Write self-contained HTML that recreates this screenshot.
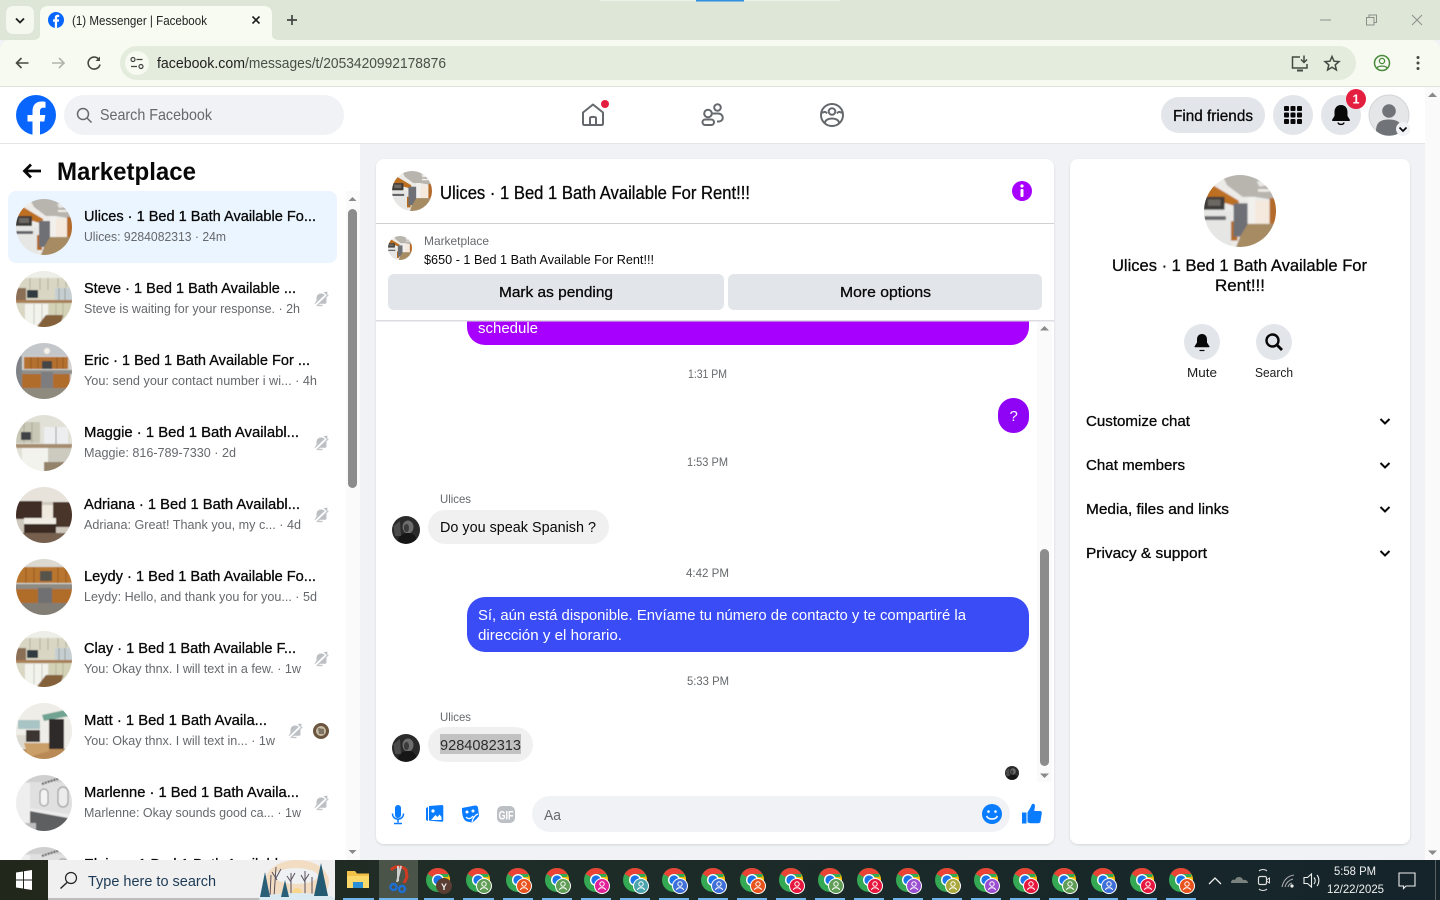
<!DOCTYPE html>
<html><head><meta charset="utf-8"><title>Messenger | Facebook</title>
<style>
html,body{margin:0;padding:0;width:1440px;height:900px;overflow:hidden;background:#f0f2f5}
svg{display:block;position:absolute;left:0;top:0}
text{font-family:"Liberation Sans",sans-serif;fill:#080809;white-space:pre}
.n{font-size:15px;stroke:#080809;stroke-width:.3px}
.s{font-size:13px;fill:#65686c}
.t{font-size:12px;fill:#65686c}
.m{font-size:15px;stroke:#080809;stroke-width:.3px}
.b{font-size:15px}
</style></head><body>
<svg width="1440" height="900" viewBox="0 0 1440 900" xmlns="http://www.w3.org/2000/svg">
<defs>
<linearGradient id="tb" x1="0" y1="0" x2="1" y2="0"><stop offset="0" stop-color="#22271b"/><stop offset=".35" stop-color="#1f2d28"/><stop offset="1" stop-color="#14242a"/></linearGradient>
<filter id="ph" x="-5%" y="-5%" width="110%" height="110%"><feGaussianBlur stdDeviation=".55"/></filter>
<clipPath id="cc"><circle cx="28" cy="28" r="28"/></clipPath>
<symbol id="a" viewBox="0 0 56 56"><g clip-path="url(#cc)"><g filter="url(#ph)"><rect x="-2" y="-2" width="60" height="60" fill="#ecebe8"/><path d="M13 -2H58V20L40 17L30 17L18 8Z" fill="#b8b4ae"/><path d="M41 5l7-1 3 4-8 1z" fill="#e8e8e6"/><path d="M42 11h9v2h-9z" fill="#f2f0ea"/><path d="M2 11L7 8L27 20V25L17 22H2Z" fill="#bd6f20"/><rect x="-2" y="17" width="18" height="10" fill="#3e3a38"/><rect x="3" y="19" width="10" height="5" fill="#6c6864"/><rect x="-2" y="28" width="24" height="30" fill="#e6e6e4"/><rect x="0" y="32" width="17" height="3" fill="#66666a"/><rect x="21" y="36" width="5" height="15" fill="#b56a1e"/><rect x="23" y="22" width="11" height="26" fill="#6e7076"/><rect x="34" y="17" width="6" height="22" fill="#f2f0ec"/><rect x="40" y="20" width="11" height="18" fill="#f4e9dc"/><rect x="51" y="18" width="7" height="20" fill="#b36a2b"/><path d="M25 56L28 48L34 38H58V58H20Z" fill="#a68b63"/></g></g></symbol>
<symbol id="b" viewBox="0 0 56 56"><g clip-path="url(#cc)"><g filter="url(#ph)"><rect x="-2" y="-2" width="60" height="60" fill="#d9d7c4"/><rect x="-2" y="-2" width="60" height="9" fill="#eeeee8"/><path d="M14 7v12M24 7v12M32 7v12M42 7v9M50 7v9" stroke="#aaa892" stroke-width=".8"/><rect x="-2" y="17" width="12" height="15" fill="#8a6e55"/><rect x="11" y="19" width="11" height="8" fill="#333a40"/><rect x="39" y="17" width="19" height="12" fill="#c5cfd2"/><path d="M43 17v12M49 17v12" stroke="#8b8f88" stroke-width=".8"/><rect x="-2" y="29" width="60" height="3" fill="#a97f56"/><rect x="9" y="33" width="23" height="22" fill="#f3f3ee"/><path d="M18 33v20M26 33v18" stroke="#b8b8ae" stroke-width=".7"/><rect x="33" y="32" width="22" height="15" fill="#d4d2b6"/><path d="M40 32v15M47 32v15" stroke="#aaa892" stroke-width=".7"/><path d="M19 58L30 44H47L44 58Z" fill="#84603a"/></g></g></symbol>
<symbol id="c" viewBox="0 0 56 56"><g clip-path="url(#cc)"><g filter="url(#ph)"><rect x="-2" y="-2" width="60" height="60" fill="#d4d2ce"/><rect x="-2" y="-2" width="60" height="15" fill="#c4c7ca"/><circle cx="31" cy="8" r="3" fill="#f7f3ea"/><rect x="8" y="14" width="44" height="12" fill="#b4702e"/><path d="M15 14v12M22 14v12M41 14v12M47 14v12" stroke="#8c5522" stroke-width=".8"/><rect x="26" y="18" width="10" height="8" fill="#444"/><rect x="-2" y="27" width="60" height="4" fill="#8f8f8c"/><rect x="6" y="31" width="48" height="14" fill="#b06c2c"/><rect x="25" y="29" width="12" height="16" fill="#7d7d80"/><rect x="-2" y="13" width="8" height="33" fill="#7f8388"/><rect x="-2" y="45" width="60" height="13" fill="#8f8a7e"/></g></g></symbol>
<symbol id="d" viewBox="0 0 56 56"><g clip-path="url(#cc)"><g filter="url(#ph)"><rect x="-2" y="-2" width="60" height="60" fill="#e2e1d8"/><rect x="0" y="7" width="24" height="21" fill="#c9c8b6"/><path d="M8 7v21M16 7v21" stroke="#a4a290" stroke-width=".8"/><rect x="28" y="12" width="24" height="17" fill="#eceef0"/><path d="M40 12v17" stroke="#888" stroke-width=".8"/><rect x="5" y="17" width="10" height="8" fill="#3f4346"/><rect x="-2" y="29" width="60" height="4" fill="#a68c6e"/><rect x="6" y="33" width="26" height="25" fill="#f3f3ee"/><rect x="32" y="33" width="26" height="15" fill="#cdcbbf"/><rect x="28" y="47" width="30" height="11" fill="#94826a"/></g></g></symbol>
<symbol id="e" viewBox="0 0 56 56"><g clip-path="url(#cc)"><g filter="url(#ph)"><rect x="-2" y="-2" width="60" height="60" fill="#cfc8bd"/><rect x="-2" y="-2" width="60" height="17" fill="#e7e3db"/><rect x="-2" y="14" width="28" height="18" fill="#3f2d25"/><rect x="37" y="15" width="21" height="25" fill="#4a352a"/><rect x="26" y="18" width="11" height="14" fill="#eee8dd"/><rect x="8" y="31" width="32" height="6" fill="#f0ece4"/><rect x="8" y="37" width="32" height="11" fill="#3a2a22"/><rect x="-2" y="46" width="60" height="12" fill="#76614e"/></g></g></symbol>
<symbol id="f" viewBox="0 0 56 56"><g clip-path="url(#cc)"><g filter="url(#ph)"><rect x="-2" y="-2" width="60" height="60" fill="#dcd9d0"/><rect x="-2" y="8" width="60" height="16" fill="#b9762f"/><path d="M10 8v16M18 8v16M42 8v16M50 8v16" stroke="#8c5522" stroke-width=".8"/><rect x="24" y="12" width="12" height="10" fill="#57524c"/><rect x="-2" y="25" width="60" height="5" fill="#8e8a84"/><rect x="-2" y="30" width="60" height="14" fill="#b06d2b"/><rect x="22" y="29" width="14" height="15" fill="#6f6f72"/><rect x="-2" y="44" width="60" height="14" fill="#827e74"/></g></g></symbol>
<symbol id="h" viewBox="0 0 56 56"><g clip-path="url(#cc)"><g filter="url(#ph)"><rect x="-2" y="-2" width="60" height="60" fill="#efede7"/><path d="M26 12L58 5V12L28 18Z" fill="#6fa391"/><rect x="2" y="17" width="22" height="9" fill="#a8c4c4"/><rect x="33" y="16" width="15" height="30" fill="#2f2a2a"/><rect x="10" y="27" width="14" height="12" fill="#3d3532"/><rect x="-2" y="32" width="12" height="13" fill="#dcdad0"/><path d="M-2 46H58V58H-2Z" fill="#b98a55"/><path d="M8 40H33V48L12 54Z" fill="#cba067"/></g></g></symbol>
<symbol id="i" viewBox="0 0 56 56"><g clip-path="url(#cc)"><g filter="url(#ph)"><rect x="-2" y="-2" width="60" height="60" fill="#e0e0e0"/><rect x="-2" y="-2" width="60" height="9" fill="#cfcfcf"/><rect x="24" y="14" width="8" height="17" rx="4" fill="#f3f3f3" stroke="#8a8a8a"/><rect x="42" y="12" width="10" height="20" rx="5" fill="#ececec" stroke="#8a8a8a"/><path d="M26 9l18-6" stroke="#444" stroke-width="2" stroke-dasharray="2 1"/><path d="M14 36L58 44V58H14Z" fill="#5d5f61"/><path d="M14 33L58 40V44L14 36Z" fill="#ececec"/><rect x="-2" y="8" width="16" height="40" fill="#eeeeee"/><rect x="-2" y="48" width="22" height="10" fill="#bdbdbd"/></g></g></symbol>
<symbol id="sm" viewBox="0 0 16 16"><circle cx="8" cy="8" r="8" fill="#6b5540"/><circle cx="8" cy="8" r="5" fill="#c8bba4"/><path d="M5 5l6 1 0 5-5 0z" fill="#7f7464"/></symbol>
<symbol id="g" viewBox="0 0 24 24"><circle cx="12" cy="12" r="12" fill="#34a853"/><path d="M12 0A12 12 0 0 1 22.4 6H12A6 6 0 0 0 6.800 9L1.600 6A12 12 0 0 1 12 0Z" fill="#ea4335"/><path d="M22.400 6A12 12 0 0 1 12 24L17.200 15A6 6 0 0 0 17.200 9H22.400Z" fill="#fbbc04"/><circle cx="12" cy="12" r="6" fill="#fff"/><circle cx="12" cy="12" r="4.600" fill="#1a73e8"/></symbol>
<symbol id="mute" viewBox="0 0 16 16"><path d="M8 2.500C5 2.500 3.500 4.800 3.500 7.300V9.700L1.500 12.800H12.500L13.500 12V8L13 5.500C12 3.700 10.500 2.500 8 2.500Z" fill="#bcc0c4"/><path d="M5.500 14.500H9.500" stroke="#bcc0c4" stroke-width="1.300"/><path d="M2.500 14.500L15 2.500" stroke="#fff" stroke-width="2.400"/><path d="M3.700 15L15.300 3.800" stroke="#bcc0c4" stroke-width="1.200"/><path d="M10.500 1L14.500 .8 14 4.500Z" fill="#bcc0c4"/></symbol>
<symbol id="pav" viewBox="0 0 56 56"><g clip-path="url(#cc)"><g filter="url(#ph)"><rect x="-2" y="-2" width="60" height="60" fill="#2a2a2a"/><ellipse cx="32" cy="22" rx="11" ry="13" fill="#6d6d6d"/><ellipse cx="29" cy="24" rx="5" ry="8" fill="#3a3a3a"/><path d="M10 58C10 40 22 34 32 34S52 40 48 58Z" fill="#141414"/><path d="M3 20L16 10L18 40L6 40Z" fill="#4c4c4c"/></g></g></symbol>
<clipPath id="clipChat"><rect x="376" y="320" width="661" height="470"/></clipPath>
<clipPath id="clipList"><rect x="0" y="143" width="346" height="717"/></clipPath>
<filter id="sh" x="-2%" y="-2%" width="104%" height="104%"><feDropShadow dx="0" dy="1" stdDeviation="1" flood-color="#000" flood-opacity=".12"/></filter>
</defs>

<!-- Chrome frame -->
<rect width="1440" height="40" fill="#dee6d7"/>
<rect x="600" y="0" width="240" height="1" fill="#eef0ea"/>
<rect x="696" y="0" width="48" height="1.500" fill="#2f8fe0"/>
<rect x="6" y="6" width="28" height="28" rx="7" fill="#f4f8ef"/>
<path d="M16 18.500l4 4 4-4" fill="none" stroke="#1f1f1f" stroke-width="1.800"/>
<path d="M32 40C38 40 40 38 40 34V14C40 9 43 6 48 6H264C269 6 272 9 272 14V34C272 38 274 40 280 40Z" fill="#f7fbf2"/>
<circle cx="56" cy="20" r="8" fill="#0866ff"/>
<path d="M54.800 28V21.800H53V19.400H54.800V17.800C54.800 15.700 56 14.700 57.600 14.700L59.200 14.800V17H58.100C57.300 17 57.100 17.400 57.100 18V19.400H59.100L58.800 21.800H57.100V28Z" fill="#fff"/>
<text x="72" y="25" font-size="12.500" textLength="135" lengthAdjust="spacingAndGlyphs" style="fill:#1f1f1f">(1) Messenger | Facebook</text>
<path d="M252.500 16.500l7 7M259.500 16.500l-7 7" stroke="#1f1f1f" stroke-width="1.600"/>
<path d="M292 15v10M287 20h10" stroke="#444" stroke-width="1.700"/>
<path d="M1320 20h11" stroke="#8c8f88" stroke-width="1"/>
<path d="M1366.500 17.500h7.500v7.500h-7.500zM1369 17.500v-2.500h7.500v7.500h-2.500" fill="none" stroke="#8c8f88" stroke-width="1"/>
<path d="M1412 15l10 10M1422 15l-10 10" stroke="#8c8f88" stroke-width="1"/>
<path d="M0 52C0 44 4 40 10 40H1430C1436 40 1440 44 1440 50V86H0Z" fill="#f6faf0"/>
<rect y="86" width="1440" height="1" fill="#dfe6d9"/>
<path d="M28.500 63H16.500M21.500 58l-5 5 5 5" fill="none" stroke="#444a42" stroke-width="1.600"/>
<path d="M52 63h12M59 58l5 5-5 5" fill="none" stroke="#b0b4ab" stroke-width="1.600"/>
<path d="M99 59.500A6 6 0 1 0 100 64.500" fill="none" stroke="#444a42" stroke-width="1.600"/><path d="M100 56.500v4.500h-4.500z" fill="#444a42"/>
<rect x="120" y="46" width="1236" height="34" rx="17" fill="#e4ecdd"/>
<circle cx="137" cy="63" r="12" fill="#f6faf0"/>
<circle cx="133" cy="59.500" r="2" fill="none" stroke="#444" stroke-width="1.200"/><path d="M136.500 59.500h6M131 66.500h6" stroke="#444" stroke-width="1.200"/><circle cx="141" cy="66.500" r="2" fill="none" stroke="#444" stroke-width="1.200"/>
<text x="157" y="68" font-size="14.500" textLength="88" lengthAdjust="spacingAndGlyphs" style="fill:#1f1f1f">facebook.com</text>
<text x="245" y="68" font-size="14.500" textLength="201" lengthAdjust="spacingAndGlyphs" style="fill:#4a4f47">/messages/t/2053420992178876</text>
<path d="M1300 57h-7.500v11h14.500v-4" fill="none" stroke="#444a42" stroke-width="1.500"/><path d="M1297 70.500h6" stroke="#444a42" stroke-width="2"/><path d="M1304 55.500v6.500M1301 59.500l3 3 3-3" fill="none" stroke="#444a42" stroke-width="1.500"/>
<path d="M1332 56.500l2 4.700 5 .4-3.800 3.300 1.200 5-4.400-2.700-4.400 2.700 1.200-5-3.800-3.300 5-.4z" fill="none" stroke="#444a42" stroke-width="1.500"/>
<circle cx="1382" cy="63" r="7.500" fill="none" stroke="#4a8a3c" stroke-width="1.500"/><circle cx="1382" cy="61" r="2.600" fill="none" stroke="#4a8a3c" stroke-width="1.300"/><path d="M1377 68c1.200-2.500 8.800-2.500 10 0" fill="none" stroke="#4a8a3c" stroke-width="1.300"/>
<circle cx="1418" cy="57.500" r="1.500" fill="#444a42"/><circle cx="1418" cy="63" r="1.500" fill="#444a42"/><circle cx="1418" cy="68.500" r="1.500" fill="#444a42"/>

<!-- FB header -->
<rect y="87" width="1440" height="56" fill="#fff"/>
<rect y="143" width="1425" height="1" fill="#e4e5e8"/>
<circle cx="36" cy="115" r="20" fill="#0866ff"/>
<path d="M32.500 135V121.500H27.500V115H32.500V111.500C32.500 105 35.500 101.500 42 101.500C43.500 101.500 45 101.700 45.500 101.900V107.700H43.500C40.800 107.700 40 109 40 111.300V115H45.300L44.300 121.500H40V135Z" fill="#fff"/>
<rect x="64" y="95" width="280" height="40" rx="20" fill="#f0f2f5"/>
<circle cx="83" cy="114" r="5.500" fill="none" stroke="#65686c" stroke-width="1.500"/><path d="M87 118l4.500 4.500" stroke="#65686c" stroke-width="1.500"/>
<text x="100" y="120" font-size="16" textLength="112" lengthAdjust="spacingAndGlyphs" style="fill:#65686c">Search Facebook</text>
<path d="M583 123.500V112.500L593 104.500L603 112.500V123.500C603 124.500 602.500 125 601.500 125H584.500C583.500 125 583 124.500 583 123.500Z" fill="none" stroke="#65686c" stroke-width="2" stroke-linejoin="round"/><path d="M590 125V118C590 116.500 596 116.500 596 118V125" fill="none" stroke="#65686c" stroke-width="2"/>
<circle cx="605" cy="104" r="4" fill="#e41e3f"/>
<circle cx="708" cy="113.500" r="3.800" fill="none" stroke="#65686c" stroke-width="2"/><rect x="702.500" y="119.500" width="11.500" height="5.500" rx="2.700" fill="none" stroke="#65686c" stroke-width="2"/><circle cx="717.500" cy="107.500" r="3.300" fill="none" stroke="#65686c" stroke-width="2"/><path d="M712 113.500h6c6 0 6.500 8 .5 8h-1.500" fill="none" stroke="#65686c" stroke-width="2"/>
<circle cx="832" cy="115" r="11" fill="none" stroke="#65686c" stroke-width="2"/><circle cx="832" cy="111.500" r="3.300" fill="none" stroke="#65686c" stroke-width="2"/><path d="M825 123c0-6 14-6 14 0M822 113c3-2 4-1 5 .5M842 113c-3-2-4-1-5 .5" fill="none" stroke="#65686c" stroke-width="2"/>
<rect x="1161" y="97" width="104" height="36" rx="18" fill="#e2e5e9"/>
<text x="1173" y="121" font-size="16" class="m" style="font-size:16px" textLength="80" lengthAdjust="spacingAndGlyphs">Find friends</text>
<circle cx="1293" cy="115" r="20" fill="#e2e5e9"/>
<g fill="#080809"><rect x="1284" y="106" width="5" height="5" rx="1"/><rect x="1290.500" y="106" width="5" height="5" rx="1"/><rect x="1297" y="106" width="5" height="5" rx="1"/><rect x="1284" y="112.500" width="5" height="5" rx="1"/><rect x="1290.500" y="112.500" width="5" height="5" rx="1"/><rect x="1297" y="112.500" width="5" height="5" rx="1"/><rect x="1284" y="119" width="5" height="5" rx="1"/><rect x="1290.500" y="119" width="5" height="5" rx="1"/><rect x="1297" y="119" width="5" height="5" rx="1"/></g>
<circle cx="1341" cy="115" r="20" fill="#e2e5e9"/>
<path d="M1341 105c-4.500 0-6.500 3.500-6.500 7v4l-2.500 4c0 .6.300 1 1 1h16c.7 0 1-.4 1-1l-2.500-4v-4c0-3.500-2-7-6.500-7Z" fill="#080809"/><path d="M1338 122.500c.5 2.500 5.500 2.500 6 0" fill="none" stroke="#080809" stroke-width="1.500"/>
<circle cx="1356" cy="99" r="10" fill="#e41e3f"/><text x="1352.500" y="103.500" font-size="12.500" font-weight="bold" style="fill:#fff">1</text>
<circle cx="1389" cy="115" r="20" fill="#e4e6e8" stroke="#d3d5d8"/>
<circle cx="1389" cy="111" r="6.800" fill="#707377"/><path d="M1376 131c0-9 5-11.500 13-11.500s13 2.500 13 11.500a20 20 0 0 1-26 0Z" fill="#707377"/>
<circle cx="1403" cy="129" r="7" fill="#f0f2f5"/><path d="M1399.500 127.500l3.500 3.500 3.500-3.500" fill="none" stroke="#080809" stroke-width="1.700"/>

<!-- Page scrollbar -->
<rect x="1425" y="87" width="15" height="773" fill="#fafafa"/>
<path d="M1432.500 92.500l4.500 4.500h-9z" fill="#8a8a8a"/><path d="M1432.500 855l4.500-4.500h-9z" fill="#8a8a8a"/>

<!-- Left sidebar -->
<rect y="144" width="360" height="716" fill="#fff"/>
<path d="M41 171H25M31 164.500L24.500 171L31 177.500" fill="none" stroke="#080809" stroke-width="2.800"/>
<text x="57" y="180" font-size="25" font-weight="bold" textLength="139" lengthAdjust="spacingAndGlyphs">Marketplace</text>
<rect x="8" y="191" width="329" height="72" rx="8" fill="#ebf5ff"/>
<g clip-path="url(#clipList)">
<use href="#a" x="16" y="199" width="56" height="56"/>
<use href="#b" x="16" y="271" width="56" height="56"/>
<use href="#c" x="16" y="343" width="56" height="56"/>
<use href="#d" x="16" y="415" width="56" height="56"/>
<use href="#e" x="16" y="487" width="56" height="56"/>
<use href="#f" x="16" y="559" width="56" height="56"/>
<use href="#b" x="16" y="631" width="56" height="56"/>
<use href="#h" x="16" y="703" width="56" height="56"/>
<use href="#i" x="16" y="775" width="56" height="56"/>
<use href="#i" x="16" y="847" width="56" height="56"/>
</g>
<text x="84" y="221" class="n" textLength="232" lengthAdjust="spacingAndGlyphs">Ulices · 1 Bed 1 Bath Available Fo...</text>
<text x="84" y="241" class="s" textLength="142" lengthAdjust="spacingAndGlyphs">Ulices: 9284082313 · 24m</text>
<text x="84" y="293" class="n" textLength="212" lengthAdjust="spacingAndGlyphs">Steve · 1 Bed 1 Bath Available ...</text>
<text x="84" y="313" class="s" textLength="216" lengthAdjust="spacingAndGlyphs">Steve is waiting for your response. · 2h</text>
<text x="84" y="365" class="n" textLength="226" lengthAdjust="spacingAndGlyphs">Eric · 1 Bed 1 Bath Available For ...</text>
<text x="84" y="385" class="s" textLength="233" lengthAdjust="spacingAndGlyphs">You: send your contact number i wi... · 4h</text>
<text x="84" y="437" class="n" textLength="215" lengthAdjust="spacingAndGlyphs">Maggie · 1 Bed 1 Bath Availabl...</text>
<text x="84" y="457" class="s" textLength="152" lengthAdjust="spacingAndGlyphs">Maggie: 816-789-7330 · 2d</text>
<text x="84" y="509" class="n" textLength="216" lengthAdjust="spacingAndGlyphs">Adriana · 1 Bed 1 Bath Availabl...</text>
<text x="84" y="529" class="s" textLength="217" lengthAdjust="spacingAndGlyphs">Adriana: Great! Thank you, my c... · 4d</text>
<text x="84" y="581" class="n" textLength="232" lengthAdjust="spacingAndGlyphs">Leydy · 1 Bed 1 Bath Available Fo...</text>
<text x="84" y="601" class="s" textLength="233" lengthAdjust="spacingAndGlyphs">Leydy: Hello, and thank you for you... · 5d</text>
<text x="84" y="653" class="n" textLength="212" lengthAdjust="spacingAndGlyphs">Clay · 1 Bed 1 Bath Available F...</text>
<text x="84" y="673" class="s" textLength="217" lengthAdjust="spacingAndGlyphs">You: Okay thnx. I will text in a few. · 1w</text>
<text x="84" y="725" class="n" textLength="183" lengthAdjust="spacingAndGlyphs">Matt · 1 Bed 1 Bath Availa...</text>
<text x="84" y="745" class="s" textLength="191" lengthAdjust="spacingAndGlyphs">You: Okay thnx. I will text in... · 1w</text>
<text x="84" y="797" class="n" textLength="215" lengthAdjust="spacingAndGlyphs">Marlenne · 1 Bed 1 Bath Availa...</text>
<text x="84" y="817" class="s" textLength="217" lengthAdjust="spacingAndGlyphs">Marlenne: Okay sounds good ca... · 1w</text>
<text x="84" y="869" class="n" textLength="194" lengthAdjust="spacingAndGlyphs">Elaine · 1 Bed 1 Bath Availabl</text>
<use href="#mute" x="313" y="291" width="16" height="16"/>
<use href="#mute" x="313" y="435" width="16" height="16"/>
<use href="#mute" x="313" y="507" width="16" height="16"/>
<use href="#mute" x="313" y="651" width="16" height="16"/>
<use href="#mute" x="287" y="723" width="16" height="16"/>
<use href="#mute" x="313" y="795" width="16" height="16"/>
<use href="#sm" x="313" y="723" width="16" height="16"/>
<rect x="346" y="191" width="14" height="669" fill="#fafafa"/>
<rect x="348" y="209" width="9" height="279" rx="4.500" fill="#8c8c8c"/>
<path d="M352.500 197l4 4h-8z" fill="#8a8a8a"/><path d="M352.500 854l4-4h-8z" fill="#8a8a8a"/>

<!-- Chat card -->
<rect x="376" y="159" width="678" height="685" rx="8" fill="#fff" filter="url(#sh)"/>
<g clip-path="url(#clipChat)">
<rect x="467" y="290" width="562" height="55" rx="18" fill="#a700ff"/>
<text x="478" y="333" class="b" textLength="60" lengthAdjust="spacingAndGlyphs" style="fill:#fff">schedule</text>
</g>
<rect x="376" y="223" width="678" height="97" fill="#fff"/>
<rect x="376" y="320" width="678" height="1.500" fill="#dcdde0"/>
<use href="#a" x="392" y="171" width="40" height="40"/>
<text x="440" y="199" class="m" style="font-size:18px" textLength="310" lengthAdjust="spacingAndGlyphs">Ulices · 1 Bed 1 Bath Available For Rent!!!</text>
<circle cx="1022" cy="191" r="10" fill="#a700ff"/><circle cx="1022" cy="186" r="1.600" fill="#fff"/><rect x="1020.500" y="189" width="3" height="8" rx="1" fill="#fff"/>
<rect x="376" y="223" width="678" height="1" fill="#ced0d4"/>
<use href="#a" x="388" y="236" width="24" height="24"/>
<text x="424" y="245" class="t" textLength="65" lengthAdjust="spacingAndGlyphs">Marketplace</text>
<text x="424" y="264" font-size="13" textLength="230" lengthAdjust="spacingAndGlyphs">$650 - 1 Bed 1 Bath Available For Rent!!!</text>
<rect x="388" y="274" width="336" height="36" rx="6" fill="#e2e5e9"/>
<rect x="728" y="274" width="314" height="36" rx="6" fill="#e2e5e9"/>
<text x="499" y="297" class="m" textLength="114" lengthAdjust="spacingAndGlyphs">Mark as pending</text>
<text x="840" y="297" class="m" textLength="91" lengthAdjust="spacingAndGlyphs">More options</text>

<text x="688" y="378" class="t" textLength="39" lengthAdjust="spacingAndGlyphs">1:31 PM</text>
<rect x="998" y="398" width="31" height="35" rx="15.500" fill="#9004f5"/>
<text x="1009.500" y="421" class="b" style="fill:#fff">?</text>
<text x="687" y="466" class="t" textLength="41" lengthAdjust="spacingAndGlyphs">1:53 PM</text>
<text x="440" y="503" class="t" textLength="31" lengthAdjust="spacingAndGlyphs">Ulices</text>
<use href="#pav" x="392" y="516" width="28" height="28"/>
<rect x="428" y="510" width="181" height="34" rx="17" fill="#f0f0f0"/>
<text x="440" y="532" class="b" textLength="156" lengthAdjust="spacingAndGlyphs">Do you speak Spanish ?</text>
<text x="686" y="577" class="t" textLength="43" lengthAdjust="spacingAndGlyphs">4:42 PM</text>
<rect x="467" y="597" width="562" height="55" rx="18" fill="#3a4cf5"/>
<text x="478" y="620" class="b" textLength="488" lengthAdjust="spacingAndGlyphs" style="fill:#fff">Sí, aún está disponible. Envíame tu número de contacto y te compartiré la</text>
<text x="478" y="640" class="b" textLength="144" lengthAdjust="spacingAndGlyphs" style="fill:#fff">dirección y el horario.</text>
<text x="687" y="685" class="t" textLength="42" lengthAdjust="spacingAndGlyphs">5:33 PM</text>
<text x="440" y="721" class="t" textLength="31" lengthAdjust="spacingAndGlyphs">Ulices</text>
<use href="#pav" x="392" y="734" width="28" height="28"/>
<rect x="428" y="727" width="105" height="35" rx="17.500" fill="#f0f0f0"/>
<rect x="440" y="734" width="81" height="20" fill="#c2c2c2"/>
<text x="440" y="750" class="b" textLength="81" lengthAdjust="spacingAndGlyphs" style="fill:#2c2c2c">9284082313</text>
<use href="#pav" x="1005" y="766" width="14" height="14"/>
<rect x="1037" y="322" width="15" height="460" fill="#fafafa"/>
<path d="M1044.500 326l4.500 4.500h-9z" fill="#8a8a8a"/><path d="M1044.500 778l4.500-4.500h-9z" fill="#8a8a8a"/>
<rect x="1040" y="549" width="9" height="217" rx="4.500" fill="#8c8c8c"/>

<!-- input row -->
<g fill="#0a7cff">
<rect x="395" y="805" width="6" height="13" rx="3"/><path d="M392.500 813.500c0 7.500 11 7.500 11 0" fill="none" stroke="#0a7cff" stroke-width="1.500"/><path d="M398 819.500v3M394 823.500h8" stroke="#0a7cff" stroke-width="1.500"/>
<path d="M426 808l2-1v14l-2-1zM429 806l13-1c.8 0 1.300.5 1.300 1.300v14c0 1-.5 1.500-1.300 1.500l-12-1c-.6 0-1-.5-1-1.200z"/>
<path d="M462 808l13-2.500c1.500-.2 2.500.5 3 2l1 8c.2 1.300-6 7-7 7l-5-1c-3-1-5-5-5-12Z"/>
</g>
<circle cx="433" cy="811" r="1.600" fill="#fff"/><path d="M431 820l4.500-5 2 2 2-2.500 2 2.500v3z" fill="#fff"/>
<circle cx="467" cy="812" r="1.500" fill="#fff"/><circle cx="473" cy="811" r="1.500" fill="#fff"/><path d="M466 817c2 2.500 5 2 7-1M472 822c1-4 3-7 6-8" fill="none" stroke="#fff" stroke-width="1.300"/>
<rect x="497" y="806" width="18" height="17" rx="5" fill="#bcc0c4"/>
<text x="498.500" y="819.500" font-size="12" font-weight="bold" textLength="15" lengthAdjust="spacingAndGlyphs" style="fill:#fff">GIF</text>
<rect x="532" y="796" width="478" height="36" rx="18" fill="#f0f2f5"/>
<text x="544" y="820" class="b" textLength="17" lengthAdjust="spacingAndGlyphs" style="fill:#65686c">Aa</text>
<circle cx="992" cy="814" r="10" fill="#0a7cff"/><circle cx="988.500" cy="811.500" r="1.300" fill="#fff"/><circle cx="995.500" cy="811.500" r="1.300" fill="#fff"/><path d="M986.500 816c2 4 9 4 11 0" fill="none" stroke="#fff" stroke-width="1.500"/>
<path d="M1022 812.500h4.500v11H1022ZM1027.500 812.500l3.500-6c.5-2 1.200-2.800 2.200-2.800 1.500 0 2 1.500 1.700 3.500l-.7 3.800h5.800c1.300 0 2 1 1.800 2.200l-1.300 8c-.2 1.300-1 2-2.300 2h-7c-1.700 0-3.700-.5-3.700-1.500Z" fill="#0a7cff"/>

<!-- Right card -->
<rect x="1070" y="159" width="340" height="685" rx="8" fill="#fff" filter="url(#sh)"/>
<use href="#a" x="1204" y="175" width="72" height="72"/>
<text x="1112" y="271" class="m" style="font-size:17px" textLength="255" lengthAdjust="spacingAndGlyphs">Ulices · 1 Bed 1 Bath Available For</text>
<text x="1215" y="291" class="m" style="font-size:17px" textLength="50" lengthAdjust="spacingAndGlyphs">Rent!!!</text>
<circle cx="1202" cy="342" r="18" fill="#e2e5e9"/>
<path d="M1202 334c-3.500 0-5 2.700-5 5.500v3l-2.500 4c0 .5.300.8 1 .8h13c.7 0 1-.3 1-.8l-2.500-4v-3c0-2.800-1.500-5.500-5-5.500Z" fill="#080809"/><path d="M1199.500 350.500h5" stroke="#080809" stroke-width="1.200"/>
<circle cx="1274" cy="342" r="18" fill="#e2e5e9"/>
<circle cx="1272.500" cy="340.500" r="6" fill="none" stroke="#080809" stroke-width="2.400"/><path d="M1277 345l5 5" stroke="#080809" stroke-width="2.800"/>
<text x="1187" y="377" class="s" style="fill:#1c1c1c" textLength="30" lengthAdjust="spacingAndGlyphs">Mute</text>
<text x="1255" y="377" class="s" style="fill:#1c1c1c" textLength="38" lengthAdjust="spacingAndGlyphs">Search</text>
<text x="1086" y="426" class="m" textLength="104" lengthAdjust="spacingAndGlyphs">Customize chat</text>
<text x="1086" y="470" class="m" textLength="99" lengthAdjust="spacingAndGlyphs">Chat members</text>
<text x="1086" y="514" class="m" textLength="143" lengthAdjust="spacingAndGlyphs">Media, files and links</text>
<text x="1086" y="558" class="m" textLength="121" lengthAdjust="spacingAndGlyphs">Privacy &amp; support</text>
<g fill="none" stroke="#080809" stroke-width="2"><path d="M1380.500 419l4.500 4.500 4.500-4.500"/><path d="M1380.500 463l4.500 4.500 4.500-4.500"/><path d="M1380.500 507l4.500 4.500 4.500-4.500"/><path d="M1380.500 551l4.500 4.500 4.500-4.500"/></g>

<!-- Taskbar -->
<rect y="860" width="1440" height="40" fill="url(#tb)"/>
<g fill="#fff"><path d="M16 872.500l7-1v8h-7zM24 871.300l8-1.300v9.500h-8zM16 880.500h7v8l-7-1zM24 880.500h8v9.500l-8-1.300z"/></g>
<rect x="48" y="860" width="287" height="39" fill="#f0f0f0"/>
<rect x="48" y="898" width="287" height="2" fill="#bdbdbd"/>
<circle cx="71" cy="878" r="5.500" fill="none" stroke="#222" stroke-width="1.200"/><path d="M67 882.500l-6.500 6" stroke="#222" stroke-width="1.400"/>
<text x="88" y="886" font-size="15" textLength="128" lengthAdjust="spacingAndGlyphs" style="fill:#1c3a55">Type here to search</text>
<!-- scenic search art -->
<ellipse cx="297" cy="882" rx="32" ry="22" fill="#f2dcc2"/>
<ellipse cx="296" cy="876" rx="22" ry="8" fill="#eef0f2"/>
<path d="M270 897l1-22M274 897l2-30M277 880l-5-8M276 878l5-9M291 897v-24M291 882l-4-6M291 880l4-7M305 897v-26M305 882l-4-7M305 880l4-6M312 897v-20" stroke="#5a4f5c" stroke-width="1"/>
<circle cx="297" cy="893" r="5" fill="#f8d68c"/>
<ellipse cx="297" cy="899" rx="38" ry="6" fill="#dbe9f0"/>
<path d="M260 897l5-25 5 25z" fill="#2a5f78"/>
<path d="M281 897l4-17 4 17z" fill="#2a5f78"/>
<path d="M314 896l7-33 7 33z" fill="#245a72"/>

<path d="M347 871h8l2 2.500h12v14h-22z" fill="#f2c14a"/><rect x="347" y="876" width="22" height="12" fill="#fbd86a"/><rect x="353" y="882" width="10" height="6" fill="#2b8fd6"/>
<rect x="379" y="860" width="39" height="40" fill="#4b5449"/>
<path d="M391 870a10 10 0 0 1 15 0l1 7-3 6" fill="none" stroke="#cf3a20" stroke-width="3"/><path d="M398 866v15M401 866l-4 16" stroke="#cfcfcf" stroke-width="2"/><circle cx="393.500" cy="887" r="3" fill="none" stroke="#1d6fd6" stroke-width="2.400"/><circle cx="402" cy="889" r="3" fill="none" stroke="#1d6fd6" stroke-width="2.400"/>
<g fill="#6fb4ea"><rect x="343" y="898" width="31" height="2"/><rect x="379" y="898" width="39" height="2"/><rect x="424" y="898" width="30" height="2"/><rect x="463" y="898" width="31" height="2"/><rect x="503" y="898" width="30" height="2"/><rect x="542" y="898" width="30" height="2"/><rect x="581" y="898" width="30" height="2"/><rect x="620" y="898" width="30" height="2"/><rect x="659" y="898" width="30" height="2"/><rect x="698" y="898" width="30" height="2"/><rect x="737" y="898" width="30" height="2"/><rect x="776" y="898" width="30" height="2"/><rect x="815" y="898" width="30" height="2"/><rect x="854" y="898" width="30" height="2"/><rect x="893" y="898" width="30" height="2"/><rect x="932" y="898" width="30" height="2"/><rect x="971" y="898" width="30" height="2"/><rect x="1010" y="898" width="30" height="2"/><rect x="1049" y="898" width="30" height="2"/><rect x="1088" y="898" width="30" height="2"/><rect x="1127" y="898" width="30" height="2"/><rect x="1166" y="898" width="30" height="2"/></g>
<use href="#g" x="426" y="868" width="24" height="24"/><circle cx="444" cy="886" r="8" fill="#5a3d33"/><text x="441" y="890" font-size="9" font-weight="bold" style="fill:#eee">Y</text>
<use href="#g" x="466" y="868" width="24" height="24"/><circle cx="484" cy="886" r="7.500" fill="#5f9c55" stroke="#fff"/><circle cx="484" cy="884" r="2.200" fill="none" stroke="#fff"/><path d="M480.500 890c.5-3 6.500-3 7 0" fill="none" stroke="#fff"/>
<g transform="translate(1 0)">
<use href="#g" x="505" y="868" width="24" height="24"/><circle cx="523" cy="886" r="7.500" fill="#e8521c" stroke="#fff"/><circle cx="523" cy="884" r="2.200" fill="none" stroke="#fff"/><path d="M519.500 890c.5-3 6.500-3 7 0" fill="none" stroke="#fff"/>
<use href="#g" x="544" y="868" width="24" height="24"/><circle cx="562" cy="886" r="7.500" fill="#5f9c55" stroke="#fff"/><circle cx="562" cy="884" r="2.200" fill="none" stroke="#fff"/><path d="M558.500 890c.5-3 6.500-3 7 0" fill="none" stroke="#fff"/>
<use href="#g" x="583" y="868" width="24" height="24"/><circle cx="601" cy="886" r="7.500" fill="#e0219a" stroke="#fff"/><circle cx="601" cy="884" r="2.200" fill="none" stroke="#fff"/><path d="M597.500 890c.5-3 6.500-3 7 0" fill="none" stroke="#fff"/>
<use href="#g" x="622" y="868" width="24" height="24"/><circle cx="640" cy="886" r="7.500" fill="#4aa3ad" stroke="#fff"/><circle cx="640" cy="884" r="2.200" fill="none" stroke="#fff"/><path d="M636.500 890c.5-3 6.500-3 7 0" fill="none" stroke="#fff"/>
<use href="#g" x="661" y="868" width="24" height="24"/><circle cx="679" cy="886" r="7.500" fill="#3f6fd8" stroke="#fff"/><circle cx="679" cy="884" r="2.200" fill="none" stroke="#fff"/><path d="M675.500 890c.5-3 6.500-3 7 0" fill="none" stroke="#fff"/>
<use href="#g" x="700" y="868" width="24" height="24"/><circle cx="718" cy="886" r="7.500" fill="#3f6fd8" stroke="#fff"/><circle cx="718" cy="884" r="2.200" fill="none" stroke="#fff"/><path d="M714.500 890c.5-3 6.500-3 7 0" fill="none" stroke="#fff"/>
<use href="#g" x="739" y="868" width="24" height="24"/><circle cx="757" cy="886" r="7.500" fill="#e8521c" stroke="#fff"/><circle cx="757" cy="884" r="2.200" fill="none" stroke="#fff"/><path d="M753.500 890c.5-3 6.500-3 7 0" fill="none" stroke="#fff"/>
<use href="#g" x="778" y="868" width="24" height="24"/><circle cx="796" cy="886" r="7.500" fill="#e6173f" stroke="#fff"/><circle cx="796" cy="884" r="2.200" fill="none" stroke="#fff"/><path d="M792.500 890c.5-3 6.500-3 7 0" fill="none" stroke="#fff"/>
<use href="#g" x="817" y="868" width="24" height="24"/><circle cx="835" cy="886" r="7.500" fill="#5f9c55" stroke="#fff"/><circle cx="835" cy="884" r="2.200" fill="none" stroke="#fff"/><path d="M831.500 890c.5-3 6.500-3 7 0" fill="none" stroke="#fff"/>
<use href="#g" x="856" y="868" width="24" height="24"/><circle cx="874" cy="886" r="7.500" fill="#e6173f" stroke="#fff"/><circle cx="874" cy="884" r="2.200" fill="none" stroke="#fff"/><path d="M870.500 890c.5-3 6.500-3 7 0" fill="none" stroke="#fff"/>
<use href="#g" x="895" y="868" width="24" height="24"/><circle cx="913" cy="886" r="7.500" fill="#9a4fd0" stroke="#fff"/><circle cx="913" cy="884" r="2.200" fill="none" stroke="#fff"/><path d="M909.500 890c.5-3 6.500-3 7 0" fill="none" stroke="#fff"/>
<use href="#g" x="934" y="868" width="24" height="24"/><circle cx="952" cy="886" r="7.500" fill="#a8a83c" stroke="#fff"/><circle cx="952" cy="884" r="2.200" fill="none" stroke="#fff"/><path d="M948.500 890c.5-3 6.500-3 7 0" fill="none" stroke="#fff"/>
<use href="#g" x="973" y="868" width="24" height="24"/><circle cx="991" cy="886" r="7.500" fill="#9a4fd0" stroke="#fff"/><circle cx="991" cy="884" r="2.200" fill="none" stroke="#fff"/><path d="M987.500 890c.5-3 6.500-3 7 0" fill="none" stroke="#fff"/>
<use href="#g" x="1012" y="868" width="24" height="24"/><circle cx="1030" cy="886" r="7.500" fill="#e6173f" stroke="#fff"/><circle cx="1030" cy="884" r="2.200" fill="none" stroke="#fff"/><path d="M1026.500 890c.5-3 6.500-3 7 0" fill="none" stroke="#fff"/>
<use href="#g" x="1051" y="868" width="24" height="24"/><circle cx="1069" cy="886" r="7.500" fill="#5f9c55" stroke="#fff"/><circle cx="1069" cy="884" r="2.200" fill="none" stroke="#fff"/><path d="M1065.500 890c.5-3 6.500-3 7 0" fill="none" stroke="#fff"/>
<use href="#g" x="1090" y="868" width="24" height="24"/><circle cx="1108" cy="886" r="7.500" fill="#3f6fd8" stroke="#fff"/><circle cx="1108" cy="884" r="2.200" fill="none" stroke="#fff"/><path d="M1104.500 890c.5-3 6.500-3 7 0" fill="none" stroke="#fff"/>
<use href="#g" x="1129" y="868" width="24" height="24"/><circle cx="1147" cy="886" r="7.500" fill="#e6173f" stroke="#fff"/><circle cx="1147" cy="884" r="2.200" fill="none" stroke="#fff"/><path d="M1143.500 890c.5-3 6.500-3 7 0" fill="none" stroke="#fff"/>
<use href="#g" x="1168" y="868" width="24" height="24"/><circle cx="1186" cy="886" r="7.500" fill="#e8521c" stroke="#fff"/><circle cx="1186" cy="884" r="2.200" fill="none" stroke="#fff"/><path d="M1182.500 890c.5-3 6.500-3 7 0" fill="none" stroke="#fff"/>
</g>
<path d="M1209 884l6-6 6 6" fill="none" stroke="#eee" stroke-width="1.300"/>
<path d="M1231 883c0-3 2-4 4-3 1-4 7-4 8 0 3-.5 5 1 5 3Z" fill="#7a8280"/>
<path d="M1259 871c2-2 6-2 8 0M1259 889c2 2 6 2 8 0" fill="none" stroke="#ddd"/><rect x="1258.500" y="876.500" width="8" height="8" rx="1.500" fill="none" stroke="#ddd" stroke-width="1.200"/><path d="M1266.500 880l3-2v5l-3-2" fill="none" stroke="#ddd"/>
<path d="M1282 887c1.500-7 6-11 12-12M1285 887c1-4 4-7 8-8M1288 887c.6-2 2-3.500 4-4" fill="none" stroke="#aaa" stroke-width="1.100"/><circle cx="1292" cy="886" r="1.600" fill="#eee"/>
<path d="M1304 877.500h3.500l4-3.500v13l-4-3.500h-3.500Z" fill="none" stroke="#eee" stroke-width="1.100"/><path d="M1314 877.500c1.500 2 1.500 4.500 0 6.500M1317 875c2.500 3 2.500 8 0 11" fill="none" stroke="#eee" stroke-width="1.100"/>
<text x="1334" y="875" font-size="12" textLength="42" lengthAdjust="spacingAndGlyphs" style="fill:#f0f0f0">5:58 PM</text>
<text x="1327" y="893" font-size="12" textLength="57" lengthAdjust="spacingAndGlyphs" style="fill:#f0f0f0">12/22/2025</text>
<path d="M1399 873h16v13h-9l-2.500 2.500V886H1399Z" fill="none" stroke="#eee" stroke-width="1.100"/>
<rect x="1435" y="860" width="1" height="40" fill="#5a6260"/>
</svg>
</body></html>
